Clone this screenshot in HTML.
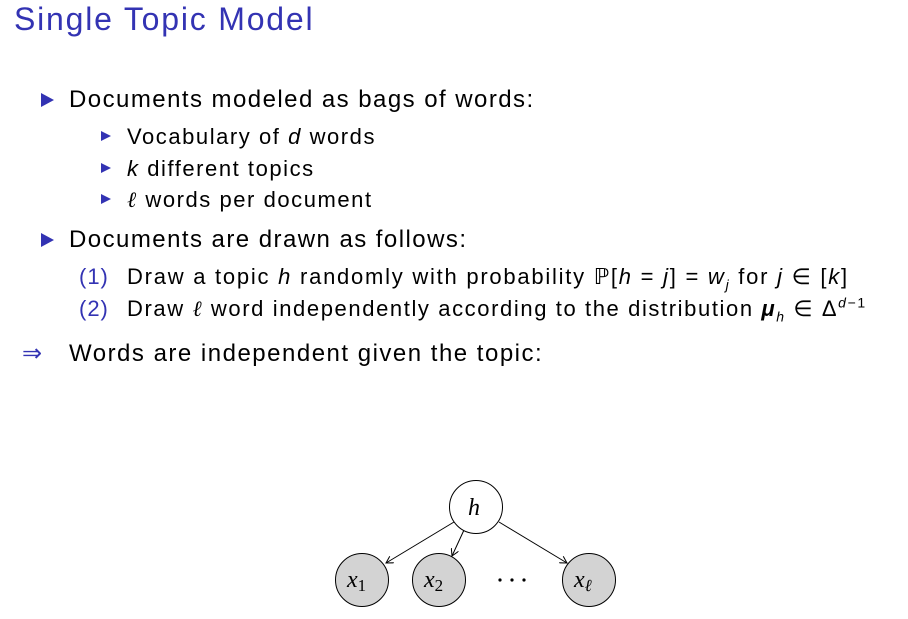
<!DOCTYPE html>
<html><head><meta charset="utf-8"><style>
body{margin:0;width:908px;height:619px;background:#fff;position:relative;overflow:hidden;font-family:"Liberation Sans",sans-serif;color:#000}
.t{position:absolute;white-space:nowrap;line-height:1}
.b{color:#3333b3}
sub,sup{line-height:0}
.tri{position:absolute;width:0;height:0;border-top:7px solid transparent;border-bottom:7px solid transparent;border-left:13px solid #3333b3}
.tri.s{border-top:5.5px solid transparent;border-bottom:5.5px solid transparent;border-left:10px solid #3333b3}
i{font-style:italic}
.m{font-family:"Liberation Serif",serif;font-style:italic}
</style></head><body>
<div class="t b" style="left:14px;top:3px;font-size:32px;letter-spacing:1.8px">Single Topic Model</div>

<div class="tri" style="left:41px;top:93px"></div>
<div class="t" style="left:69px;top:88px;font-size:24px;letter-spacing:1.45px">Documents modeled as bags of words:</div>
<div class="tri s" style="left:101px;top:131px"></div>
<div class="t" style="left:127px;top:126px;font-size:22px;letter-spacing:1.55px">Vocabulary of <i>d</i> words</div>
<div class="tri s" style="left:101px;top:163px"></div>
<div class="t" style="left:127px;top:158px;font-size:22px;letter-spacing:1.55px"><i>k</i> different topics</div>
<div class="tri s" style="left:101px;top:194px"></div>
<div class="t" style="left:127px;top:189px;font-size:22px;letter-spacing:1.55px"><span class="m">ℓ</span> words per document</div>

<div class="tri" style="left:41px;top:233px"></div>
<div class="t" style="left:69px;top:228px;font-size:24px;letter-spacing:1.45px">Documents are drawn as follows:</div>
<div class="t b" style="left:79px;top:266px;font-size:22px;letter-spacing:1px">(1)</div>
<div class="t" style="left:127px;top:266px;font-size:22px;letter-spacing:1.75px">Draw a topic <i>h</i> randomly with probability ℙ[<i>h</i> = <i>j</i>] = <i>w<sub style="font-size:14px">j</sub></i> for <i>j</i> ∈ [<i>k</i>]</div>
<div class="t b" style="left:79px;top:298px;font-size:22px;letter-spacing:1px">(2)</div>
<div class="t" style="left:127px;top:298px;font-size:22px;letter-spacing:1.6px">Draw <span class="m">ℓ</span> word independently according to the distribution <b><i>μ</i></b><sub style="font-size:14px"><i>h</i></sub> ∈ Δ<sup style="font-size:14px"><i>d</i>−1</sup></div>

<div class="t b" style="left:22px;top:342px;font-size:24px">⇒</div>
<div class="t" style="left:69px;top:342px;font-size:24px;letter-spacing:1.5px">Words are independent given the topic:</div>

<svg style="position:absolute;left:0;top:0" width="908" height="619">
<defs><marker id="a" markerWidth="8" markerHeight="8" refX="7" refY="4" orient="auto" markerUnits="userSpaceOnUse"><path d="M0,0 L7,4 L0,8" fill="none" stroke="#000" stroke-width="1"/></marker></defs>
<g stroke="#000" stroke-width="1" fill="none">
<line x1="454" y1="522" x2="386" y2="563" marker-end="url(#a)"/>
<line x1="464" y1="530" x2="452" y2="556" marker-end="url(#a)"/>
<line x1="499" y1="522" x2="567" y2="563" marker-end="url(#a)"/>
</g>
<circle cx="476" cy="507" r="26.5" fill="#fff" stroke="#000"/>
<circle cx="362" cy="580" r="26.5" fill="#d3d3d3" stroke="#000"/>
<circle cx="439" cy="580" r="26.5" fill="#d3d3d3" stroke="#000"/>
<circle cx="589" cy="580" r="26.5" fill="#d3d3d3" stroke="#000"/>
<g font-family="Liberation Serif,serif" font-style="italic" font-size="24">
<text x="468" y="515">h</text>
<text x="347" y="587">x<tspan font-style="normal" font-size="17" dy="4">1</tspan></text>
<text x="424" y="587">x<tspan font-style="normal" font-size="17" dy="4">2</tspan></text>
<text x="574" y="587">x<tspan font-size="17" dy="4">ℓ</tspan></text>
</g>
<g fill="#000"><circle cx="500" cy="580" r="1.6"/><circle cx="512" cy="580" r="1.6"/><circle cx="524" cy="580" r="1.6"/></g>
</svg>
</body></html>
